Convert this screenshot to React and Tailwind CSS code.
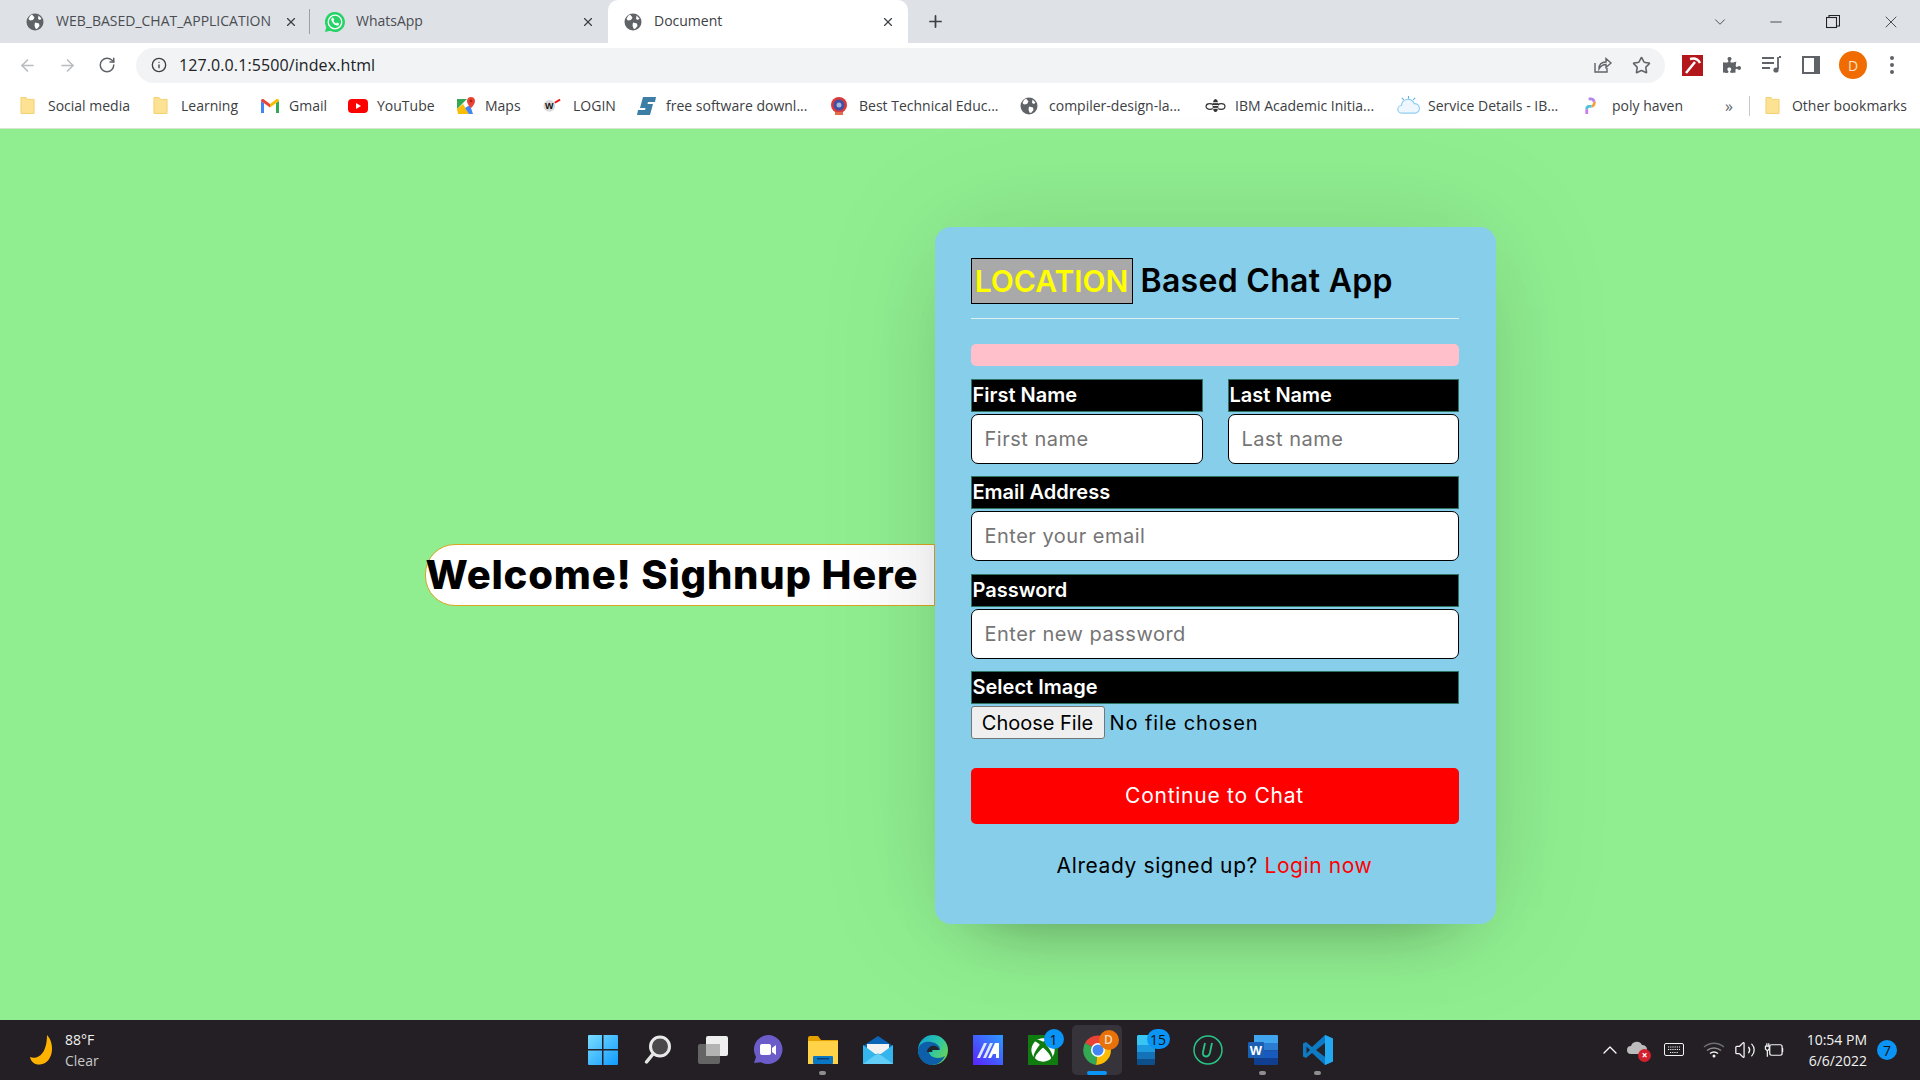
import React from "react";
import { ArrowLeft, ArrowRight, RotateCw, Info, X, Plus, ChevronDown, Minus, Star, ChevronUp, Volume2 } from "lucide-react";
import { FaPuzzlePiece, FaXbox } from "react-icons/fa";

const Globe = ({ className = "w-[18px] h-[18px]" }) => (
  <svg viewBox="0 0 18 18" className={className}>
    <circle cx="9" cy="9" r="8.5" fill="#5f6368" />
    <path d="M6 1.5 8.5 4.5 7 7 4 7.5 2.5 6 4 3ZM9 9.5l4 1 .5 2.5-2.5 3-1.5-.5-1-3ZM12.5 2.5l3 3-1.5 1.5-2-1Z" fill="#fff" />
  </svg>
);

const WhatsappIcon = () => (
  <svg viewBox="0 0 20 20" className="w-[20px] h-[20px]">
    <path d="M10 0a10 10 0 1 1-4.800 18.800L0 20l1.300-5A10 10 0 0 1 10 0Z" fill="#25d366" />
    <circle cx="10" cy="10" r="6.800" fill="none" stroke="#fff" strokeWidth="1.300" />
    <path d="M7 6c-1 1-1 2.500.5 4.500S11 14 13 13.500c1-.3 1.300-1.500 1-2l-2-1-.8 1c-1-.3-2.200-1.500-2.700-2.700l.8-.8-1-2.200C7.800 5.600 7.300 5.700 7 6Z" fill="#fff" />
  </svg>
);

const Folder = () => (
  <svg viewBox="0 0 16 20" className="w-[15px] h-[19px]">
    <path d="M1 1.5h5.5l1.5 2h7v15H1Z" fill="#fde293" stroke="#f2cf6e" strokeWidth="1" />
  </svg>
);

const Gmail = () => (
  <svg viewBox="0 0 20 16" className="w-5 h-4">
    <path d="M1 15V3l3 2v10Z" fill="#4285f4" />
    <path d="M16 15V5l3-2v12Z" fill="#34a853" />
    <path d="M1 3c0-2 2-2.500 3-1.500L10 6l0 3.500L1 3Z" fill="#ea4335" />
    <path d="M19 3c0-2-2-2.500-3-1.500L10 6v3.500Z" fill="#fbbc04" />
  </svg>
);

const Youtube = () => (
  <svg viewBox="0 0 20 16" className="w-5 h-4">
    <rect y="1" width="20" height="14" rx="4" fill="#f00" />
    <path d="M8 5v6l5-3Z" fill="#fff" />
  </svg>
);

const Maps = () => (
  <svg viewBox="0 0 20 20" className="w-5 h-5">
    <path d="M1 3h10L1 13Z" fill="#34a853" />
    <path d="M1 13 7 8l6 10H2Z" fill="#fbbc04" />
    <path d="M9 12l5-3 3 9h-4Z" fill="#4285f4" />
    <path d="M15 1a4.200 4.200 0 0 1 4 4.200C19 8 15 12 15 12s-4-4-4-6.800A4.200 4.200 0 0 1 15 1Z" fill="#ea4335" />
    <circle cx="15" cy="5" r="1.400" fill="#a52714" />
  </svg>
);

const LoginIcon = () => (
  <svg viewBox="0 0 20 16" className="w-[18px] h-[15px]">
    <circle cx="7" cy="8.500" r="6.500" fill="#d9d9d9" />
    <text x="7" y="12" textAnchor="middle" fontSize="10" fontWeight="700" fontFamily="Liberation Sans, sans-serif" fill="#111">W</text>
    <path d="M13 5l6-3.500" stroke="#e11" strokeWidth="2" />
  </svg>
);

const SoftIcon = () => (
  <svg viewBox="0 0 20 20" className="w-5 h-5">
    <path d="M6 1h13l-1 5H11l-.5 2H16l-3 11H0l1-5h7l.5-2H3Z" fill="#3c7ea6" />
  </svg>
);

const EduIcon = () => (
  <svg viewBox="0 0 20 20" className="w-5 h-5">
    <circle cx="10" cy="9" r="8" fill="#d93a3a" />
    <circle cx="10" cy="9" r="5.500" fill="#3f51a3" />
    <circle cx="10" cy="9" r="2.500" fill="#a8b4e0" />
    <rect x="6" y="16" width="8" height="3" fill="#e56a4a" />
  </svg>
);

const BeeIcon = () => (
  <svg viewBox="0 0 22 18" className="w-[21px] h-[17px]">
    <ellipse cx="11" cy="9" rx="3" ry="7" fill="#333" />
    <ellipse cx="5" cy="10" rx="4" ry="3" fill="none" stroke="#333" strokeWidth="1.300" />
    <ellipse cx="17" cy="10" rx="4" ry="3" fill="none" stroke="#333" strokeWidth="1.300" />
    <path d="M8 6h6M8 9h6M8 12h6" stroke="#fff" strokeWidth="1" />
  </svg>
);

const CloudIcon = () => (
  <svg viewBox="0 0 24 20" className="w-[23px] h-[19px]">
    <path d="M5 18a4 4 0 0 1-.5-8A7 7 0 0 1 18 8a5 5 0 0 1 1 10Z" fill="#eef7fd" stroke="#8fcdf2" strokeWidth="1.200" />
    <path d="M12 0v3M5 2l2 2M19 2l-2 2" stroke="#5bb4ea" strokeWidth="1.200" />
  </svg>
);

const PolyIcon = () => (
  <svg viewBox="0 0 16 20" className="w-[15px] h-[19px]" fill="none" strokeWidth="3">
    <path d="M6 3h2a4 4 0 0 1 4 3" stroke="#b685ea" />
    <path d="M12 6a4 4 0 0 1-3 5" stroke="#f5a03c" />
    <path d="M9 11H6a3 3 0 0 0-2 3" stroke="#4fc3d9" />
    <path d="M4 14v5" stroke="#c77ce8" />
  </svg>
);

const bookmarks = [
  { icon: <Folder />, label: "Social media", left: 20, iconW: 28, textW: 83 },
  { icon: <Folder />, label: "Learning", left: 22, iconW: 28, textW: 57 },
  { icon: <Gmail />, label: "Gmail", left: 22, iconW: 29, textW: 38 },
  { icon: <Youtube />, label: "YouTube", left: 21, iconW: 29, textW: 58 },
  { icon: <Maps />, label: "Maps", left: 21, iconW: 29, textW: 36 },
  { icon: <LoginIcon />, label: "LOGIN", left: 22, iconW: 30, textW: 43 },
  { icon: <SoftIcon />, label: "free software downl...", left: 21, iconW: 29, textW: 142 },
  { icon: <EduIcon />, label: "Best Technical Educ...", left: 21, iconW: 30, textW: 139 },
  { icon: <Globe />, label: "compiler-design-la...", left: 22, iconW: 29, textW: 136 },
  { icon: <BeeIcon />, label: "IBM Academic Initia...", left: 20, iconW: 30, textW: 142 },
  { icon: <CloudIcon />, label: "Service Details - IB...", left: 20, iconW: 31, textW: 133 },
  { icon: <PolyIcon />, label: "poly haven", left: 22, iconW: 29, textW: 71 },
];

const Tab = ({ icon, label, active, width, closeGap }) => (
  <div
    className={`flex items-center h-[43px] shrink-0 ${active ? "bg-white rounded-t-[10px]" : ""}`}
    style={{ width }}
  >
    <div className="w-[46px] flex justify-center pl-[4px]">{icon}</div>
    <span className={`text-[14px] mb-[2px] overflow-hidden whitespace-nowrap ${active ? "text-[#3c4043]" : "text-[#4a4d51]"}`} style={{ width: closeGap }}>
      {label}
    </span>
    <X size={14} strokeWidth={2} className="text-[#3c4043] ml-[11px]" />
  </div>
);

const Windows = () => (
  <svg viewBox="0 0 30 30" className="w-[30px] h-[30px]">
    <defs>
      <linearGradient id="win" x1="0" y1="0" x2="1" y2="1">
        <stop offset="0" stopColor="#7bdcff" />
        <stop offset="1" stopColor="#0f9bff" />
      </linearGradient>
    </defs>
    <path d="M0 1a1 1 0 0 1 1-1h13v14H0ZM15.500 0H29a1 1 0 0 1 1 1v13H15.500ZM0 15.500h14V30H1a1 1 0 0 1-1-1ZM15.500 15.500H30V29a1 1 0 0 1-1 1H15.500Z" fill="url(#win)" />
  </svg>
);

const Search = () => (
  <svg viewBox="0 0 28 30" className="w-[28px] h-[30px]">
    <circle cx="16" cy="11.500" r="9.500" fill="#4b484c" stroke="#e9e9e9" strokeWidth="3" />
    <path d="M9 19 2.500 27" stroke="#e4e4e4" strokeWidth="3.500" strokeLinecap="round" />
  </svg>
);

const TaskView = () => (
  <svg viewBox="0 0 30 28" className="w-[30px] h-[28px]">
    <rect x="8" y="0" width="22" height="20" rx="2" fill="#eeeeee" />
    <rect x="0" y="8" width="22" height="20" rx="2" fill="#6b6b6b" fillOpacity="0.9" />
    <rect x="8" y="8" width="14" height="12" fill="#b3b3b3" />
  </svg>
);

const Teams = () => (
  <svg viewBox="0 0 30 30" className="w-[30px] h-[30px]">
    <path d="M15 0a14.500 14.500 0 1 1-7 27.200L1 28l2-6A14.500 14.500 0 0 1 15 0Z" fill="#6b5cc9" />
    <rect x="7" y="9" width="11" height="11" rx="2" fill="#fff" />
    <path d="M19 13l4-3v10l-4-3Z" fill="#fff" />
  </svg>
);

const Explorer = () => (
  <svg viewBox="0 0 30 28" className="w-[30px] h-[28px]">
    <path d="M0 2a2 2 0 0 1 2-2h8l3 4h17v4H0Z" fill="#e6a100" />
    <path d="M0 5h30v23H0Z" fill="#ffd247" />
    <rect x="5" y="20" width="20" height="8" rx="1" fill="#0a76c4" />
    <rect x="9" y="22" width="12" height="1.500" fill="#063f73" />
  </svg>
);

const Mail = () => (
  <svg viewBox="0 0 30 28" className="w-[30px] h-[28px]">
    <path d="M0 10 15 0l15 10v2H0Z" fill="#0a64b8" />
    <path d="M4 8h22v10H4Z" fill="#f2f2f2" />
    <path d="M0 9l15 11L30 9v19H0Z" fill="#35b5ee" />
    <path d="M0 28 15 17l15 11Z" fill="#62cdf6" />
  </svg>
);

const Edge = () => (
  <svg viewBox="0 0 30 30" className="w-[30px] h-[30px]">
    <defs>
      <linearGradient id="edge" x1="0" y1="0" x2="1" y2="0.700">
        <stop offset="0" stopColor="#0d9fd8" />
        <stop offset="0.600" stopColor="#30c7a3" />
        <stop offset="1" stopColor="#6bd34f" />
      </linearGradient>
    </defs>
    <circle cx="15" cy="15" r="15" fill="url(#edge)" />
    <path d="M0 15c1-7 8-9 13-8 6 1 9 4 9 8H11c-1 5 4 8 9 8 3 0 5-1 7-2-3 6-8 9-13 9C7 30 0 24 0 15Z" fill="#0c5fa8" />
    <path d="M9 16c1-4 5-6 8-5 2 .5 4 2 4 4l-6 0c-1 0-1 1-.5 2H9Z" fill="#23242a" />
  </svg>
);

const Mica = () => (
  <svg viewBox="0 0 30 30" className="w-[30px] h-[30px]">
    <defs>
      <linearGradient id="mica" x1="0" y1="1" x2="1" y2="0">
        <stop offset="0" stopColor="#5a22ff" />
        <stop offset="1" stopColor="#2b9bff" />
      </linearGradient>
    </defs>
    <rect width="30" height="30" fill="url(#mica)" />
    <path d="M4 23 11 8h3L7 23ZM10 23 17 8h3l-7 15Z" fill="#dfe6ff" />
    <path d="M15 23 22 8h4v15h-3v-4h-3l-2 4Z" fill="#fff" />
  </svg>
);

const Badge = ({ children, className = "" }) => (
  <span className={`absolute flex items-center justify-center rounded-full bg-[#0a94f5] text-[#111] text-[14px] h-[20px] ${className}`}>
    {children}
  </span>
);

const Xbox = () => (
  <div className="relative w-[30px] h-[30px] bg-[#107c10] flex items-center justify-center">
    <FaXbox size={24} color="#fff" />
    <Badge className="w-[20px] -top-[6px] -right-[6px]">1</Badge>
  </div>
);

const Chrome = () => (
  <div className="relative w-[30px] h-[30px]">
    <svg viewBox="0 0 30 30" className="w-[30px] h-[30px]">
      <path d="M15 15 2 8a15 15 0 0 1 26 0Z" fill="#ea4335" />
      <path d="M15 15 2 8a15 15 0 0 0 11 22Z" fill="#34a853" />
      <path d="M15 15h13a15 15 0 0 1-15 15Z" fill="#fbbc04" />
      <path d="M15 15 28 8a15 15 0 0 1 0 7Z" fill="#fbbc04" />
      <circle cx="15" cy="15" r="7" fill="#fff" />
      <circle cx="15" cy="15" r="5.500" fill="#4285f4" />
    </svg>
    <span className="absolute -top-[5px] -right-[6px] w-[20px] h-[20px] rounded-full bg-[#e8710a] text-[#f6d9bd] text-[12px] font-semibold flex items-center justify-center">D</span>
  </div>
);

const Store = () => (
  <div className="relative w-[30px] h-[30px] flex justify-start">
    <svg viewBox="0 0 18 30" className="w-[18px] h-[30px] ml-[-1px]">
      <path d="M1 0h16v10H0V1Z" fill="#39c5f4" />
      <rect y="10" width="18" height="7" fill="#1e9ae0" />
      <rect y="17" width="18" height="7" fill="#1372b8" />
      <path d="M0 24h18v5a1 1 0 0 1-1 1H1a1 1 0 0 1-1-1Z" fill="#0d4f8b" />
    </svg>
    <Badge className="w-[23px] -top-[6px] left-[9px]">15</Badge>
  </div>
);

const UIcon = () => (
  <svg viewBox="0 0 30 30" className="w-[30px] h-[30px]" fill="none">
    <circle cx="15" cy="15" r="14" stroke="#29c485" strokeWidth="1.500" />
    <path d="M12 8 10 17c-.6 3 1 4.500 3 4.500 2.500 0 3.500-2 4-4L19 8" stroke="#29c485" strokeWidth="1.800" />
  </svg>
);

const Word = () => (
  <svg viewBox="0 0 30 30" className="w-[30px] h-[30px]">
    <path d="M6 0h23a1 1 0 0 1 1 1v7H6Z" fill="#41a5ee" />
    <rect x="6" y="8" width="24" height="7.500" fill="#2b7cd3" />
    <rect x="6" y="15.500" width="24" height="7.500" fill="#185abd" />
    <path d="M6 23h24v6a1 1 0 0 1-1 1H7a1 1 0 0 1-1-1Z" fill="#103f91" />
    <rect y="7" width="16" height="16" rx="1" fill="#1a5fb4" />
    <text x="8" y="20" textAnchor="middle" fontSize="13" fontWeight="700" fontFamily="Liberation Sans, sans-serif" fill="#fff">W</text>
  </svg>
);

const VsCode = () => (
  <svg viewBox="0 0 30 30" className="w-[30px] h-[30px]">
    <path d="M22 0 30 3.500v23L22 30 9 18l-6 5-3-1.500V8.500L3 7l6 5Z" fill="#0e7ac4" />
    <path d="M22 0 30 3.500v23L22 30Z" fill="#23a9f2" />
    <path d="M22 8v14l-9-7Z" fill="#23242a" />
    <path d="M3.500 11.500 7 15l-3.500 3.500Z" fill="#23242a" />
  </svg>
);

const dock = [
  { el: <Windows /> },
  { el: <Search /> },
  { el: <TaskView /> },
  { el: <Teams /> },
  { el: <Explorer />, dot: true },
  { el: <Mail /> },
  { el: <Edge /> },
  { el: <Mica /> },
  { el: <Xbox /> },
  { el: <Chrome />, active: true },
  { el: <Store /> },
  { el: <UIcon /> },
  { el: <Word />, dot: true },
  { el: <VsCode />, dot: true },
];

const Field = ({ label, type = "text", placeholder, className = "" }) => (
  <div className={`flex flex-col gap-[2px] ${className}`}>
    <label className="h-[33px] bg-black border border-[#2f7460] text-white text-[20px] font-semibold leading-[31px] pl-[1px]">
      {label}
    </label>
    <input
      type={type}
      placeholder={placeholder}
      className="h-[50px] w-full bg-white border border-black rounded-[7px] px-[13px] text-[20px] tracking-[0.5px] placeholder:text-[#757575] outline-none"
    />
  </div>
);

export default function App() {
  return (
    <div className="w-[1920px] h-[1080px] flex flex-col overflow-hidden font-['Inter',sans-serif]">
      {/* tabs */}
      <div className="h-[43px] bg-[#dee1e6] flex items-center shrink-0 font-['Open_Sans',sans-serif]">
        <div className="w-[10px]" />
        <Tab icon={<Globe />} label="WEB_BASED_CHAT_APPLICATION" width={299} closeGap={217} />
        <div className="w-px h-[25px] bg-[#9aa0a6] shrink-0" />
        <Tab icon={<WhatsappIcon />} label="WhatsApp" width={298} closeGap={214} />
        <Tab icon={<Globe />} label="Document" width={300} closeGap={216} active />
        <Plus size={19} strokeWidth={2.2} className="text-[#3c4043] ml-[18px]" />
        <div className="ml-auto flex items-center text-[#3c4043]">
          <ChevronDown size={18} strokeWidth={1.2} />
          <Minus size={18} strokeWidth={1.2} className="ml-[38px]" />
          <svg viewBox="0 0 14 14" className="w-[14px] h-[14px] ml-[41px]" fill="none" stroke="#222" strokeWidth="1.100">
            <rect x="0.500" y="2.500" width="10" height="10" />
            <path d="M3 2.500V.5h10.500V11h-3" />
          </svg>
          <X size={20} strokeWidth={1.1} className="ml-[41px] mr-[19px]" />
        </div>
      </div>

      {/* toolbar */}
      <div className="h-[44px] bg-white flex items-center shrink-0 font-['Open_Sans',sans-serif]">
        <ArrowLeft size={19} strokeWidth={2} className="text-[#b9bbbe] ml-[18px]" />
        <ArrowRight size={19} strokeWidth={2} className="text-[#b9bbbe] ml-[21px]" />
        <RotateCw size={18} strokeWidth={2} className="text-[#5f6368] ml-[21px]" />
        <div className="ml-[20px] w-[1529px] h-[35px] rounded-full bg-[#f1f3f4] flex items-center">
          <Info size={16} strokeWidth={2} className="text-[#3c4043] ml-[15px]" />
          <span className="ml-[12px] text-[16px] text-[#202124] tracking-[0.1px]">127.0.0.1:5500/index.html</span>
          <svg viewBox="0 0 20 20" className="w-[20px] h-[20px] ml-auto" fill="none" stroke="#5f6368" strokeWidth="1.400">
            <path d="M3 8v9h12v-4" />
            <path d="M7 14c0-5 3-7 7-7V3.500L19 8l-5 4.500V9.500c-3 0-5 1-7 4.500Z" />
          </svg>
          <Star size={19} strokeWidth={2} className="text-[#5f6368] ml-[20px] mr-[14px]" />
        </div>
        <svg viewBox="0 0 21 21" className="w-[21px] h-[21px] ml-[17px]">
          <rect width="21" height="21" fill="#b3171b" />
          <path d="M4 18 13 7M8 4c4-1 8 0 10 4" stroke="#fff" strokeWidth="2.500" fill="none" />
        </svg>
        <FaPuzzlePiece size={18} color="#5f6368" className="ml-[20px]" />
        <svg viewBox="0 0 20 18" className="w-[20px] h-[18px] ml-[21px]" fill="none" stroke="#5f6368" strokeWidth="1.800">
          <path d="M0 2h12M0 7h12M0 12h8M17 1h2M16 1v12" />
          <circle cx="14" cy="14" r="2.600" fill="#5f6368" stroke="none" />
        </svg>
        <div className="w-[18px] h-[18px] ml-[20px] border-[#5f6368] border-2 border-r-[6px]" />
        <div className="w-7 h-7 rounded-full bg-[#f06c00] text-[#fbe2cb] text-[14px] flex items-center justify-center ml-[19px]">D</div>
        <div className="ml-[23px] flex flex-col gap-[3px]">
          <div className="w-1 h-1 rounded-full bg-[#5f6368]" />
          <div className="w-1 h-1 rounded-full bg-[#5f6368]" />
          <div className="w-1 h-1 rounded-full bg-[#5f6368]" />
        </div>
      </div>

      {/* bookmarks */}
      <div className="h-[42px] pb-[4px] bg-white flex items-center shrink-0 text-[14px] text-[#3c4043] font-['Open_Sans',sans-serif] border-b border-[#d4e8d0]">
        {bookmarks.map((b) => (
          <div key={b.label} className="flex items-center shrink-0" style={{ marginLeft: b.left }}>
            <div className="flex items-center" style={{ width: b.iconW }}>{b.icon}</div>
            <span className="whitespace-nowrap" style={{ width: b.textW }}>{b.label}</span>
          </div>
        ))}
        <span className="ml-[42px] text-[#5f6368] text-[16px]">»</span>
        <div className="ml-[16px] w-px h-[20px] bg-[#c6c8cb]" />
        <div className="ml-[15px] flex items-center">
          <div className="w-[27px]"><Folder /></div>
          <span className="whitespace-nowrap">Other bookmarks</span>
        </div>
      </div>

      {/* page */}
      <div className="flex-1 pt-[2px] bg-[#90ee90] flex items-center justify-center font-['Inter',sans-serif]">
        <div className="w-[510px] h-[62px] -mt-[1px] bg-white border border-[#daa520] rounded-l-[30px] flex items-center">
          <h1 className="text-[40px] font-extrabold text-black whitespace-nowrap tracking-[0.8px]">Welcome! Sighnup Here</h1>
        </div>
        <div className="w-[561px] h-[697px] bg-[#87ceeb] rounded-[16px] pt-[30px] pl-[36px] pr-[37px] shadow-[0_0_128px_0_rgba(0,0,0,0.1),0_32px_64px_-48px_rgba(0,0,0,0.5)] shrink-0">
          <header className="flex items-center text-[32px] font-semibold pb-[13px] border-b border-[#e0eef4]">
            <span className="h-[46px] w-[162px] bg-[#a9a9a9] border border-black text-[#ffff00] flex items-center justify-center text-[30px] whitespace-nowrap">LOCATION</span>
            <span className="ml-[8px] text-black whitespace-nowrap tracking-[0.3px]">Based Chat App</span>
          </header>
          <div className="h-[22px] mt-[25px] bg-[#ffc0cb] rounded-[5px]" />
          <form className="mt-[13px]">
            <div className="flex gap-[25px]">
              <Field label="First Name" placeholder="First name" className="w-[232px]" />
              <Field label="Last Name" placeholder="Last name" className="w-[231px]" />
            </div>
            <Field label="Email Address" type="email" placeholder="Enter your email" className="mt-[12px]" />
            <Field label="Password" type="password" placeholder="Enter new password" className="mt-[13px]" />
            <div className="mt-[12px] flex flex-col gap-[2px]">
              <label className="h-[33px] bg-black border border-[#2f7460] text-white text-[20px] font-semibold leading-[31px] pl-[1px]">Select Image</label>
              <input
                type="file"
                className="h-[33px] w-full text-[20px] leading-[33px] text-black tracking-[0.9px] file:h-[33px] file:w-[134px] file:mr-[5px] file:bg-[#efefef] file:border file:border-[#767676] file:rounded-[3px] file:text-[20px] file:tracking-normal"
              />
            </div>
            <button type="button" className="mt-[29px] h-[56px] w-full bg-[#ff0000] text-white text-[21px] tracking-[0.75px] rounded-[5px]">
              Continue to Chat
            </button>
          </form>
          <p className="mt-[26px] text-center text-[21px] tracking-[0.6px] text-black">
            Already signed up? <a className="text-[#ff0000]">Login now</a>
          </p>
        </div>
      </div>

      {/* taskbar */}
      <div className="h-[60px] bg-[#231f24] grid grid-cols-[1fr_770px_1fr] items-center shrink-0 text-[#f2f2f2] font-['Open_Sans',sans-serif]">
        <div className="flex items-center pl-[30px]">
          <svg viewBox="0 0 26 30" className="w-[26px] h-[30px]">
            <path d="M17 0c8 8 7 28-7 29.500C5 30 1 27 0 22c7 3 17-2 17-22Z" fill="#ffb300" />
          </svg>
          <div className="ml-[9px] text-[14px] leading-[21px]">
            <div>88°F</div>
            <div className="text-[#c9c9c9]">Clear</div>
          </div>
        </div>
        <div className="flex">
          {dock.map((d, i) => (
            <div key={i} className="relative w-[55px] h-[60px] flex items-center justify-center">
              {d.active && <div className="absolute left-[2px] top-[5px] w-[50px] h-[50px] rounded-[5px] bg-[#37333a]" />}
              <div className="relative">{d.el}</div>
              {d.dot && <div className="absolute bottom-[5px] left-[24px] w-[7px] h-[4px] rounded-full bg-[#8e8e8e]" />}
              {d.active && <div className="absolute bottom-[5px] left-[17px] w-[20px] h-[4px] rounded-full bg-[#0a94f5]" />}
            </div>
          ))}
        </div>
        <div className="flex items-center justify-end">
          <ChevronUp size={24} strokeWidth={1.3} className="text-white" />
          <div className="relative ml-[5px] w-[22px] h-[20px]">
            <svg viewBox="0 0 20 14" className="w-[20px] h-[14px]"><path d="M4 14a4 4 0 0 1 0-8 6 6 0 0 1 11-1 4.500 4.500 0 0 1 1 9Z" fill="#bcbcbc" /></svg>
            <span className="absolute -right-[2px] -bottom-[2px] w-[13px] h-[13px] rounded-full bg-[#d3202e] text-white text-[10px] leading-[13px] text-center font-bold">×</span>
          </div>
          <svg viewBox="0 0 20 14" className="w-[20px] h-[14px] ml-[15px]" fill="none" stroke="#f2f2f2" strokeWidth="1">
            <rect x="0.500" y="0.500" width="19" height="12" rx="1.500" />
            <path d="M4 4h12M4 6.500h12M6 9.500h8" strokeDasharray="1.200 1" />
          </svg>
          <svg viewBox="0 0 22 16" className="w-[22px] h-[16px] ml-[19px]" fill="none" strokeWidth="1.500">
            <path d="M1 5c6-5 14-5 20 0" stroke="#6f6f6f" />
            <path d="M4 8.500c4-3.500 10-3.500 14 0" stroke="#8e8e8e" />
            <path d="M7 11.500c2.500-2 5.500-2 8 0" stroke="#f2f2f2" />
            <circle cx="11" cy="14" r="1.500" fill="#f2f2f2" stroke="none" />
          </svg>
          <Volume2 size={22} strokeWidth={1.4} className="ml-[9px] text-[#f2f2f2]" />
          <svg viewBox="0 0 22 16" className="w-[21px] h-[16px] ml-[8px]" fill="none" stroke="#f2f2f2" strokeWidth="1.300">
            <rect x="6" y="2.500" width="13" height="11" rx="2" />
            <path d="M19.500 6v4" />
            <path d="M1 4h5M3 1v3M5 1v3M1.500 4v3l2 2 2-2V4M3.500 9v6" />
          </svg>
          <div className="ml-[20px] w-[62px] text-right text-[14px] leading-[21px] whitespace-nowrap">
            <div>10:54 PM</div>
            <div>6/6/2022</div>
          </div>
          <span className="ml-[10px] mr-[23px] w-[20px] h-[20px] rounded-full bg-[#0a94f5] text-[#111] text-[14px] flex items-center justify-center">7</span>
        </div>
      </div>
    </div>
  );
}
